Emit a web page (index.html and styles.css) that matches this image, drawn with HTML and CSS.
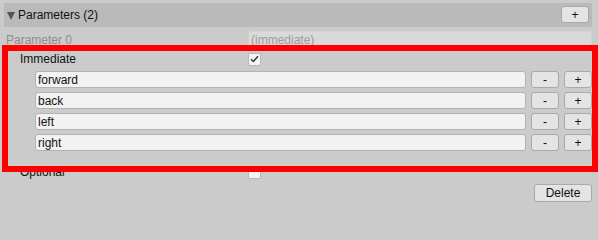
FILE: index.html
```html
<!DOCTYPE html>
<html>
<head>
<meta charset="utf-8">
<link rel="stylesheet" href="styles.css">
</head>
<body>
<div class="panel">
  <div class="header">
    <span class="tri"></span>
    <span class="title">Parameters (2)</span>
    <button class="btn btn-add">+</button>
  </div>
  <div class="row param-row">
    <span class="label disabled">Parameter 0</span>
    <div class="field field-disabled">(immediate)</div>
  </div>
  <div class="row sub-row">
    <span class="label sub">Immediate</span>
    <span class="check checked">
      <svg width="9" height="8" viewBox="0 0 9 8"><polyline points="1,4.2 3.4,6.5 8,1.2" fill="none" stroke="#333" stroke-width="1.5"/></svg>
    </span>
  </div>
  <div class="list">
    <div class="item"><div class="field item-field">forward</div><button class="btn btn-sm">-</button><button class="btn btn-sm">+</button></div>
    <div class="item"><div class="field item-field">back</div><button class="btn btn-sm">-</button><button class="btn btn-sm">+</button></div>
    <div class="item"><div class="field item-field">left</div><button class="btn btn-sm">-</button><button class="btn btn-sm">+</button></div>
    <div class="item"><div class="field item-field">right</div><button class="btn btn-sm">-</button><button class="btn btn-sm">+</button></div>
  </div>
  <div class="row sub-row opt-row">
    <span class="label sub">Optional</span>
    <span class="check"></span>
  </div>
  <div class="actions">
    <button class="btn btn-delete">Delete</button>
  </div>
</div>
<div class="highlight"></div>
</body>
</html>
```

FILE: styles.css
```css
html, body {
  margin: 0;
  padding: 0;
  background: #cbcbcb;
  width: 598px;
  height: 212px;
  overflow: hidden;
  font-family: "Liberation Sans", Arial, sans-serif;
  font-size: 12px;
  color: #111;
}
.panel {
  display: flex;
  flex-direction: column;
  padding-top: 3px;
}
.header {
  height: 24px;
  margin: 0 6px 0 4px;
  background: #bababa;
  display: flex;
  align-items: center;
  padding: 0 3px 0 3px;
}
.tri {
  width: 0;
  height: 0;
  border-left: 4.5px solid transparent;
  border-right: 4.5px solid transparent;
  border-top: 8px solid #555;
  margin-right: 3px;
  margin-top: 1px;
}
.title {
  flex: 1;
  color: #111;
}
.btn {
  font-family: "Liberation Sans", Arial, sans-serif;
  font-size: 12px;
  color: #111;
  background: #e4e4e4;
  border: 1px solid #a9a9a9;
  border-radius: 3px;
  padding: 0;
  margin: 0;
  display: flex;
  align-items: center;
  justify-content: center;
  box-sizing: border-box;
}
.btn-add {
  width: 28px;
  height: 17px;
  margin-top: -1px;
}
.row {
  display: flex;
  align-items: center;
  padding-right: 6px;
}
.param-row {
  height: 17px;
  margin-top: 4px;
}
.label {
  width: 242px;
  padding-left: 6px;
  box-sizing: border-box;
}
.label.sub {
  padding-left: 20px;
  width: 248px;
}
.param-row .label {
  width: 248px;
}
.disabled {
  color: #8e8e8e;
}
.field {
  box-sizing: border-box;
  height: 17px;
  background: #f2f2f2;
  border: 1px solid #b3b3b3;
  border-radius: 3px;
  display: flex;
  align-items: center;
  padding-left: 2px;
}
.field-disabled {
  flex: 1;
  background: #d9d9d9;
  border-color: #d2d2d2;
  color: #9c9c9c;
}
.sub-row {
  height: 18px;
  margin-top: 2px;
}
.check {
  width: 13px;
  height: 13px;
  box-sizing: border-box;
  background: #f4f4f4;
  border: 1px solid #b8b8b8;
  border-radius: 2px;
  display: flex;
  align-items: center;
  justify-content: center;
}
.list {
  display: flex;
  flex-direction: column;
  gap: 4px;
  margin-top: 3px;
  padding-left: 35px;
  padding-right: 6px;
}
.item {
  display: flex;
  gap: 5px;
  height: 17px;
}
.item-field {
  flex: 1;
}
.btn-sm {
  width: 28px;
  height: 17px;
}
.opt-row {
  margin-top: 12px;
}
.actions {
  display: flex;
  justify-content: flex-end;
  padding-right: 6px;
  margin-top: 3px;
}
.btn-delete {
  width: 58px;
  height: 18px;
}
.highlight {
  position: absolute;
  left: 2px;
  top: 45px;
  width: 596px;
  height: 127px;
  box-sizing: border-box;
  border: 6px solid #ff0000;
  pointer-events: none;
}
```
